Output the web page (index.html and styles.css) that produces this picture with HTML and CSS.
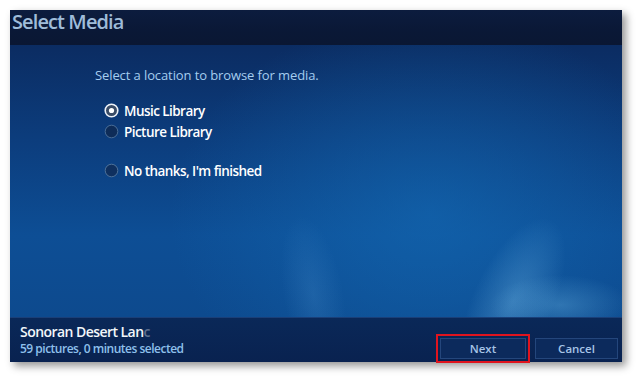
FILE: index.html
```html
<!DOCTYPE html>
<html>
<head>
<meta charset="utf-8">
<link rel="stylesheet" href="styles.css">
</head>
<body>
<div class="window">
  <div class="titlebar"><h1 class="title">Select Media</h1></div>
  <div class="content">
    <div class="streak s1"></div>
    <div class="streak s2"></div>
    <div class="glow"></div>
    <div class="panel">
      <p class="prompt">Select a location to browse for media.</p>
      <div class="options">
        <div class="option selected">
          <svg class="radio" width="15" height="15" viewBox="0 0 15 15">
            <circle cx="7.5" cy="7.5" r="6.3" fill="#3a4c66" stroke="#eef2f8" stroke-width="1.6"/>
            <circle cx="7.5" cy="7.5" r="2.6" fill="#ffffff"/>
          </svg>
          <span>Music Library</span>
        </div>
        <div class="option">
          <svg class="radio" width="15" height="15" viewBox="0 0 15 15">
            <circle cx="7.5" cy="7.5" r="6.3" fill="#0e2c58" stroke="#4a6d96" stroke-width="1"/>
          </svg>
          <span>Picture Library</span>
        </div>
        <div class="option gap">
          <svg class="radio" width="15" height="15" viewBox="0 0 15 15">
            <circle cx="7.5" cy="7.5" r="6.3" fill="#0f305f" stroke="#4f7299" stroke-width="1"/>
          </svg>
          <span>No thanks, I'm finished</span>
        </div>
      </div>
    </div>
  </div>
  <div class="footer">
    <div class="info">
      <div class="name">Sonoran Desert Lan<span class="fade">c</span></div>
      <div class="count">59 pictures, 0 minutes selected</div>
    </div>
    <div class="buttons">
      <div class="btn next">Next</div>
      <div class="btn cancel">Cancel</div>
    </div>
  </div>
</div>
</body>
</html>
```

FILE: styles.css
```css
html, body {
  margin: 0;
  padding: 0;
  background: #ffffff;
}
body {
  width: 640px;
  height: 381px;
  overflow: hidden;
  font-family: "Open Sans", "Noto Sans", sans-serif;
}
.window {
  margin: 10px 0 0 10px;
  width: 612px;
  height: 352px;
  display: flex;
  flex-direction: column;
  box-shadow: 4px 4px 8px rgba(0, 0, 0, 0.42);
  background: #0b2657;
}
.titlebar {
  height: 35px;
  background: linear-gradient(180deg, #0c1c3e 0%, #0a1836 60%, #0a1733 100%);
  display: flex;
  align-items: flex-start;
}
.title {
  margin: 0;
  padding: 0 0 0 2px;
  font-weight: 600;
  font-size: 20px;
  line-height: 24px;
  letter-spacing: -0.9px;
  color: #9fbcd9;
}
.content {
  flex: 1;
  position: relative;
  overflow: hidden;
  background:
    radial-gradient(ellipse 260px 200px at 420px 170px, rgba(20, 110, 185, 0.55), rgba(20, 110, 185, 0) 100%),
    linear-gradient(180deg, #0b2c62 0%, #0c3d7d 35%, #0d4e95 70%, #0d4a8e 100%);
}
.streak {
  position: absolute;
  pointer-events: none;
}
.s1 {
  left: 460px;
  top: 120px;
  width: 120px;
  height: 200px;
  background: radial-gradient(ellipse 40px 90px at 60px 140px, rgba(120, 190, 235, 0.35), rgba(120, 190, 235, 0));
  transform: rotate(25deg);
}
.s2 {
  left: 240px;
  top: 150px;
  width: 120px;
  height: 160px;
  background: radial-gradient(ellipse 30px 80px at 60px 100px, rgba(90, 160, 220, 0.2), rgba(90, 160, 220, 0));
  transform: rotate(-10deg);
}
.glow {
  position: absolute;
  left: 470px;
  top: 220px;
  width: 160px;
  height: 70px;
  background: radial-gradient(ellipse 70px 30px at 80px 40px, rgba(110, 185, 230, 0.35), rgba(110, 185, 230, 0));
}
.panel {
  position: relative;
  padding: 21px 0 0 85px;
}
.prompt {
  margin: 0;
  font-size: 13px;
  font-weight: 500;
  line-height: 18px;
  color: #a5cdef;
  letter-spacing: -0.1px;
}
.options {
  margin-top: 16px;
  padding-left: 9px;
  display: flex;
  flex-direction: column;
}
.option {
  display: flex;
  align-items: center;
  height: 21px;
  font-size: 13.5px;
  font-weight: 600;
  color: #ffffff;
  letter-spacing: -0.55px;
}
.option.gap {
  margin-top: 18px;
}
.radio {
  margin-right: 5px;
  flex: none;
}
.footer {
  height: 45px;
  background: linear-gradient(180deg, #0a2858 0%, #092250 100%);
  border-top: 1px solid #1a3f78;
  box-sizing: border-box;
  display: flex;
  justify-content: space-between;
}
.info {
  padding: 5px 0 0 10px;
}
.name {
  font-size: 14px;
  font-weight: 600;
  line-height: 18px;
  color: #f2f6fa;
  letter-spacing: -0.55px;
}
.fade {
  color: rgba(255, 255, 255, 0.35);
}
.count {
  font-size: 12px;
  font-weight: 600;
  line-height: 16px;
  color: #8fc0ec;
  letter-spacing: -0.5px;
}
.buttons {
  display: flex;
  align-items: flex-end;
  gap: 6px;
  padding: 0 4px 3px 0;
}
.btn {
  box-sizing: border-box;
  height: 21px;
  display: flex;
  align-items: center;
  justify-content: center;
  font-size: 11.5px;
  font-weight: 600;
  color: #a6c4e6;
  border: 1px solid #24467c;
  background: #0c2a5c;
}
.next {
  width: 86px;
  outline: 2px solid #e0141e;
  outline-offset: 2px;
  margin-right: 3px;
}
.cancel {
  width: 83px;
}
```
